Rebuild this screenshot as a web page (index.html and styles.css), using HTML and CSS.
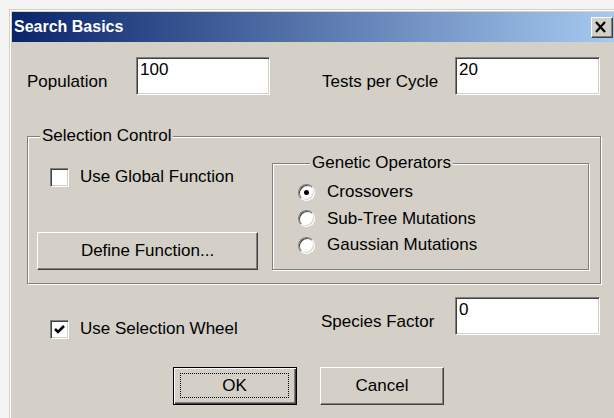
FILE: index.html
```html
<!DOCTYPE html>
<html lang="en">
<head>
<meta charset="utf-8">
<title>Search Basics</title>
<link rel="stylesheet" href="styles.css">
</head>
<body>
<div class="window">
  <div class="frame">
    <div class="titlebar">
      <span class="title">Search Basics</span>
      <button class="close" type="button" aria-label="Close">
        <svg width="22" height="21" viewBox="0 0 22 21">
          <path d="M5 5 L14 15 M14 5 L5 15" stroke="#000" stroke-width="2.2" fill="none"/>
        </svg>
      </button>
    </div>

    <form class="dialog">
      <div class="row">
        <label class="label label-pop" for="pop">Population</label>
        <input class="field field-pop" id="pop" value="100">
        <label class="label label-right label-tests" for="tests">Tests per Cycle</label>
        <input class="field field-right" id="tests" value="20">
      </div>

      <fieldset class="group selection">
        <legend>Selection Control</legend>
        <div class="selection-inner">
          <div class="selection-left">
            <label class="check check-global">
              <span class="box"></span>
              <span>Use Global Function</span>
            </label>
            <button class="btn define" type="button">Define Function...</button>
          </div>

          <fieldset class="group operators">
            <legend>Genetic Operators</legend>
            <label class="radio-row"><span class="radio on"></span><span>Crossovers</span></label>
            <label class="radio-row"><span class="radio"></span><span>Sub-Tree Mutations</span></label>
            <label class="radio-row"><span class="radio"></span><span>Gaussian Mutations</span></label>
          </fieldset>
        </div>
      </fieldset>

      <div class="row row-species">
        <div class="wheel-cell">
          <label class="check">
            <span class="box">
              <svg width="15" height="15" viewBox="0 0 15 15">
                <path d="M3 7 L6 10 L12 4" stroke="#000" stroke-width="2.6" fill="none"/>
              </svg>
            </span>
            <span>Use Selection Wheel</span>
          </label>
        </div>
        <label class="label label-right" for="species">Species Factor</label>
        <input class="field field-right" id="species" value="0">
      </div>

      <div class="buttons">
        <button class="btn default" type="button"><span class="focus">OK</span></button>
        <button class="btn cancel" type="button">Cancel</button>
      </div>
    </form>
  </div>
</div>
</body>
</html>
```

FILE: styles.css
```css
* {
  box-sizing: border-box;
}

html, body {
  margin: 0;
  overflow: hidden;
}

body {
  background: #f4f4f4;
  font-family: "Liberation Sans", Arial, sans-serif;
  font-size: 17px;
  line-height: 20px;
  color: #000;
}

/* window frame: light outer edge, white highlight, face colour */
.window {
  margin: 9px 0 0 9px;
  width: 609px;
  border: 1px solid #d4d0c8;
}

.frame {
  border: 1px solid #fff;
  padding: 1px;
  background: #d4d0c8;
}

.titlebar {
  height: 30px;
  display: flex;
  align-items: center;
  justify-content: space-between;
  padding: 0 2px;
  background: linear-gradient(to right, #0a246a, #a6caf0);
}

.title {
  color: #fff;
  font-weight: bold;
  font-size: 16px;
  line-height: 30px;
}

.close {
  width: 22px;
  height: 21px;
  padding: 0;
  margin-top: 1px;
  display: block;
  background: #d4d0c8;
  border: 1px solid;
  border-color: #fff #404040 #404040 #fff;
  box-shadow: inset -1px -1px 0 #808080;
}

.close svg {
  display: block;
  margin: -1px 0 0 -1px;
}

.dialog {
  margin: 0;
  padding: 15px 0 24px 15px;
  background: #d4d0c8;
}

.row {
  display: flex;
  align-items: flex-start;
}

.label {
  padding-top: 15px;
  white-space: nowrap;
}

.label-pop {
  width: 109px;
}

.label-tests {
  margin-left: 52px;
}

.label-right {
  width: 133px;
}

.row-species .label-right {
  width: 134px;
}

/* sunken edit boxes */
.field {
  height: 38px;
  margin: 0;
  padding: 1px 3px 13px;
  font: inherit;
  line-height: 20px;
  color: #000;
  background: #fff;
  border: 1px solid;
  border-color: #808080 #fff #fff #808080;
  box-shadow: inset 1px 1px 0 #404040, inset -1px -1px 0 #d4d0c8;
  outline: none;
}

.field-pop {
  width: 134px;
}

.field-right {
  width: 145px;
}

/* etched group boxes */
.group {
  margin: 0;
  padding: 0;
  min-width: 0;
  border: 1px solid #808080;
  box-shadow: 1px 1px 0 #fff, inset 1px 1px 0 #fff;
}

.group legend {
  margin-left: 12px;
  padding: 0 2px;
  line-height: 20px;
  background: #d4d0c8;
}

.selection {
  width: 574px;
  margin-top: 31px;
}

.selection-inner {
  display: flex;
  padding: 7px 0 13px 9px;
}

.selection-left {
  width: 221px;
  display: flex;
  flex-direction: column;
}

.check {
  display: flex;
  align-items: center;
  height: 20px;
  white-space: nowrap;
}

.check-global {
  margin: 14px 0 0 13px;
}

.box {
  width: 19px;
  height: 19px;
  margin-right: 11px;
  display: flex;
  align-items: center;
  justify-content: center;
  background: #fff;
  border: 1px solid;
  border-color: #808080 #fff #fff #808080;
  box-shadow: inset 1px 1px 0 #404040, inset -1px -1px 0 #d4d0c8;
}

.box svg {
  display: block;
}

/* raised push buttons */
.btn {
  display: flex;
  align-items: center;
  justify-content: center;
  height: 38px;
  padding: 0;
  font: inherit;
  color: #000;
  background: #d4d0c8;
  border: 1px solid;
  border-color: #fff #404040 #404040 #fff;
  box-shadow: inset -1px -1px 0 #808080;
}

.define {
  width: 221px;
  margin-top: auto;
}

.operators {
  width: 317px;
  margin-left: 14px;
  padding: 6px 0 10.5px 25px;
}

.radio-row {
  display: flex;
  align-items: center;
  height: 26.5px;
  white-space: nowrap;
}

.radio {
  width: 17px;
  height: 17px;
  margin-right: 12px;
  border-radius: 50%;
  display: flex;
  align-items: center;
  justify-content: center;
  background: #fff;
  border: 1px solid;
  border-color: #808080 #fff #fff #808080;
  box-shadow: inset 1px 1px 0 #404040, inset -1px -1px 0 #d4d0c8;
}

.radio.on::after {
  content: "";
  width: 5px;
  height: 5px;
  border-radius: 50%;
  background: #000;
}

.row-species {
  margin-top: 13px;
}

.wheel-cell {
  width: 294px;
  padding: 22px 0 0 23px;
}

.buttons {
  display: flex;
  margin-top: 28px;
  padding-left: 146px;
}

.buttons .btn {
  width: 124px;
}

.btn.default {
  border-color: #000;
  padding: 5px 7px 6px 6px;
  box-shadow: inset 1px 1px 0 #fff, inset -1px -1px 0 #404040, inset -2px -2px 0 #808080;
}

.focus {
  flex: 1;
  align-self: stretch;
  display: flex;
  align-items: center;
  justify-content: center;
  border: 1px dotted #000;
}

.cancel {
  margin-left: 23px;
}
```
